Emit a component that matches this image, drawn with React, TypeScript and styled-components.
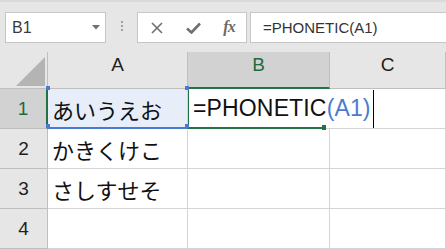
import React from "react";
import styled, { createGlobalStyle, css } from "styled-components";

const GREEN = "#217346";
const BLUE = "#4a7bd0";

const GlobalStyle = createGlobalStyle`
  html, body { margin: 0; padding: 0; }
  body {
    background: #e6e6e6;
    font-family: "Liberation Sans", "Noto Sans CJK JP", sans-serif;
  }
`;

const Window = styled.div`
  width: 446px;
  height: 249px;
  overflow: hidden;
  background: #e6e6e6;
  display: flex;
  flex-direction: column;
`;

const Toolbar = styled.div`
  height: 53px;
  box-sizing: border-box;
  border-top: 2px solid #dadada;
  padding: 10px 0 0 5px;
  display: flex;
  align-items: flex-start;
`;

const Box = styled.div`
  height: 31px;
  box-sizing: border-box;
  background: #fff;
  border: 1px solid #c6c6c6;
  display: flex;
  align-items: center;
`;

const NameBox = styled(Box)`
  width: 101px;
  padding: 1px 5px 0 6px;
  font-size: 16px;
  color: #3a3a3a;
`;

const NameCaret = styled.svg`
  margin-left: auto;
  margin-top: -2px;
`;

const Grip = styled.div`
  width: 31px;
  height: 31px;
  display: flex;
  flex-direction: column;
  align-items: center;
  justify-content: center;
  gap: 2px;
  padding-bottom: 3px;
  box-sizing: border-box;
`;

const GripDot = styled.span`
  width: 2px;
  height: 2px;
  background: #a0a0a0;
`;

const FxBox = styled(Box)`
  width: 110px;
  padding-left: 1px;
  display: grid;
  grid-template-columns: repeat(3, 36px);
  align-items: center;
  justify-items: center;
`;

const FxLabel = styled.span`
  font-family: "Liberation Serif", serif;
  font-style: italic;
  font-weight: bold;
  font-size: 16px;
  color: #6a6a6a;
  letter-spacing: -1px;
  margin-top: -1px;
`;

const FormulaBar = styled(Box)`
  flex: 1;
  margin-left: 3px;
  border-right: none;
  padding: 0 0 1px 12px;
  font-size: 15px;
  color: #333;
  white-space: nowrap;
`;

const Sheet = styled.div`
  display: grid;
  grid-template-columns: 48px 140px 142px 1fr;
  grid-template-rows: 37px repeat(4, 40px);
`;

const Corner = styled.div`
  background: #e6e6e6;
  border-right: 1px solid #bfbfbf;
  border-bottom: 1px solid #bfbfbf;
  display: flex;
  justify-content: flex-end;
  align-items: flex-end;
  padding: 0 2px 2px 0;
`;

const ColHeader = styled.div<{ $active?: boolean }>`
  background: ${(p) => (p.$active ? "#d2d2d2" : "#e6e6e6")};
  border-right: 1px solid #bfbfbf;
  border-bottom: ${(p) => (p.$active ? `2px solid ${GREEN}` : "1px solid #bfbfbf")};
  color: ${(p) => (p.$active ? "#1d6a40" : "#1e1e1e")};
  font-size: 19px;
  line-height: 19px;
  padding-top: 3px;
  text-align: center;
`;

const RowHeader = styled.div<{ $active?: boolean }>`
  background: ${(p) => (p.$active ? "#d2d2d2" : "#e6e6e6")};
  border-right: ${(p) => (p.$active ? `2px solid ${GREEN}` : "1px solid #bfbfbf")};
  border-bottom: 1px solid #bfbfbf;
  color: ${(p) => (p.$active ? "#1d6a40" : "#1e1e1e")};
  font-size: 19px;
  display: flex;
  align-items: center;
  justify-content: center;
`;

const Cell = styled.div<{ $ref?: boolean; $editing?: boolean }>`
  background: ${(p) => (p.$ref ? "#e8eef9" : "#fff")};
  border-right: 1px solid #d4d4d4;
  border-bottom: 1px solid #d4d4d4;
  padding: 0 4px;
  display: flex;
  align-items: center;
  font-size: 22px;
  color: #111;
  white-space: nowrap;
  position: relative;
  ${(p) =>
    p.$ref &&
    css`
      z-index: 3;
    `}
  ${(p) =>
    p.$editing &&
    css`
      z-index: 2;
      overflow: visible;
      padding: 0 0 0 5px;
      align-items: stretch;
    `}
`;

const Editor = styled.span`
  display: flex;
  align-items: center;
  background: #fff;
  font-size: 23px;
  letter-spacing: 0.15px;
  color: #111;
  padding-right: 3px;
  flex-shrink: 0;
`;

const RefText = styled.span`
  color: ${BLUE};
`;

const TextCaret = styled.span`
  width: 1px;
  height: 38px;
  background: #000;
  margin-left: 2px;
`;

const SelFrame = styled.div`
  position: absolute;
  top: 0;
  left: -1px;
  right: 4px;
  bottom: -1px;
  border-left: 2px solid ${GREEN};
  border-bottom: 2px solid ${GREEN};
  pointer-events: none;
`;

const FillHandle = styled.div`
  position: absolute;
  right: -1px;
  bottom: -3px;
  width: 4px;
  height: 5px;
  background: ${GREEN};
`;

const RefFrame = styled.div`
  position: absolute;
  top: -2px;
  left: -1px;
  right: -1px;
  bottom: -1px;
  border-bottom: 2px solid ${BLUE};
  pointer-events: none;
`;

const RefCorner = styled.span<{ $v: "top" | "bottom"; $h: "left" | "right" }>`
  position: absolute;
  width: 4px;
  height: 4px;
  background: ${BLUE};
  ${(p) => `${p.$v}: -1px; ${p.$h}: -1px;`}
`;

const rows = [
  { n: 1, a: "あいうえお" },
  { n: 2, a: "かきくけこ" },
  { n: 3, a: "さしすせそ" },
  { n: 4, a: "" },
];

export default function App() {
  return (
    <>
      <GlobalStyle />
      <Window>
        <Toolbar>
          <NameBox>
            B1
            <NameCaret width="8" height="5" viewBox="0 0 8 5">
              <polygon points="0,0 8,0 4,4.5" fill="#6d6d6d" />
            </NameCaret>
          </NameBox>
          <Grip>
            <GripDot />
            <GripDot />
            <GripDot />
          </Grip>
          <FxBox>
            <svg width="12" height="12" viewBox="0 0 12 12">
              <path d="M1 1 L11 11 M11 1 L1 11" stroke="#707070" strokeWidth="1.6" />
            </svg>
            <svg width="15" height="12" viewBox="0 0 15 12">
              <path d="M1 6.5 L5.5 10.5 L14 1.5" stroke="#707070" strokeWidth="2.6" fill="none" />
            </svg>
            <FxLabel>fx</FxLabel>
          </FxBox>
          <FormulaBar>=PHONETIC(A1)</FormulaBar>
        </Toolbar>
        <Sheet>
          <Corner>
            <svg width="29" height="29" viewBox="0 0 29 29">
              <polygon points="29,0 29,29 0,29" fill="#b4b4b4" />
            </svg>
          </Corner>
          <ColHeader>A</ColHeader>
          <ColHeader $active>B</ColHeader>
          <ColHeader>C</ColHeader>
          {rows.map((r) => (
            <React.Fragment key={r.n}>
              <RowHeader $active={r.n === 1}>{r.n}</RowHeader>
              {r.n === 1 ? (
                <>
                  <Cell $ref>
                    {r.a}
                    <RefFrame>
                      <RefCorner $v="top" $h="left" />
                      <RefCorner $v="top" $h="right" />
                      <RefCorner $v="bottom" $h="left" />
                      <RefCorner $v="bottom" $h="right" />
                    </RefFrame>
                  </Cell>
                  <Cell $editing>
                    <Editor>
                      =PHONETIC<RefText>(A1)</RefText>
                      <TextCaret />
                    </Editor>
                    <SelFrame>
                      <FillHandle />
                    </SelFrame>
                  </Cell>
                  <Cell />
                </>
              ) : (
                <>
                  <Cell>{r.a}</Cell>
                  <Cell />
                  <Cell />
                </>
              )}
            </React.Fragment>
          ))}
        </Sheet>
      </Window>
    </>
  );
}
